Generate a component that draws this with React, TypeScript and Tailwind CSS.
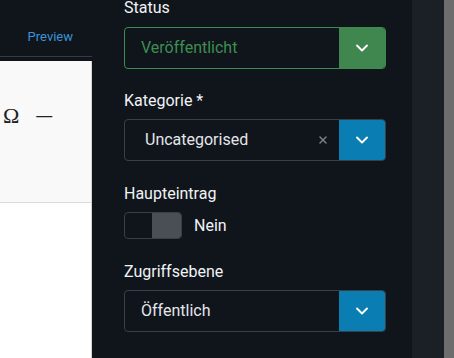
import { ChevronDown, X } from "lucide-react";

// ==================== 下拉选择 ====================

type SelectProps = {
  value: string;
  tone: "green" | "blue";
  clearable?: boolean;
};

const Select = ({ value, tone, clearable }: SelectProps) => {
  const green = tone === "green";
  const textClass = green
    ? "pl-4 text-[#3d8f50]"
    : clearable
      ? "pl-5 text-[#e4e6ea]"
      : "pl-4 text-[#e4e6ea]";

  return (
    <div
      className={`flex h-[42px] w-[262px] overflow-hidden rounded-[4px] border ${
        green ? "border-[#3d8b4f]" : "border-[#3a3f47]"
      }`}
    >
      <div className="flex flex-1 items-center">
        <span className={`text-[16px] ${textClass}`}>{value}</span>
        {clearable && (
          <X className="ml-auto mr-[10px] h-[12px] w-[12px] text-[#7b7f86]" strokeWidth={3} />
        )}
      </div>
      <div
        className={`flex w-[46px] items-center justify-center ${
          green ? "bg-[#3f864f]" : "bg-[#0a7db3]"
        }`}
      >
        <ChevronDown className="h-[20px] w-[20px] text-white" strokeWidth={2.25} />
      </div>
    </div>
  );
};

const Label = ({ children }: { children: React.ReactNode }) => (
  <p className="text-[16px] leading-[20px] text-[#f1f3f5]">{children}</p>
);

export default function App() {
  return (
    <div
      className="flex h-[358px] w-[454px] overflow-hidden bg-[#10151c]"
      style={{ fontFamily: "Roboto, 'Liberation Sans', sans-serif" }}
    >
      {/* 左侧编辑器 */}
      <div className="flex w-[92px] flex-col">
        <div className="flex h-[56px] items-end justify-end pr-[19px] pb-[10px]">
          <span className="text-[13px] text-[#3b93d6]">Preview</span>
        </div>
        <div className="h-px bg-[#343942]" />
        <div className="mt-[4px] flex flex-1 flex-col border-r border-[#d4d4d4] bg-white">
          <div className="flex h-[142px] items-start gap-[17px] border-b border-[#dadada] bg-[#f9f9f9] pl-[3px] pt-[44px]">
            <span
              className="text-[22px] leading-[22px] text-[#222]"
              style={{ fontFamily: "'Liberation Serif', serif" }}
            >
              Ω
            </span>
            <span
              className="text-[16px] leading-[22px] text-[#222]"
              style={{ fontFamily: "'Liberation Sans', sans-serif" }}
            >
              —
            </span>
          </div>
          <div className="flex-1" />
        </div>
      </div>

      {/* 右侧设置面板 */}
      <div className="flex w-[320px] flex-col pl-[32px]">
        <div className="-mt-[2px]">
          <Label>Status</Label>
        </div>
        <div className="mt-[9px]">
          <Select value="Veröffentlicht" tone="green" />
        </div>

        <div className="mt-[22px]">
          <Label>Kategorie *</Label>
        </div>
        <div className="mt-[8px]">
          <Select value="Uncategorised" tone="blue" clearable />
        </div>

        <div className="mt-[23px]">
          <Label>Haupteintrag</Label>
        </div>
        <div className="mt-[8px] flex items-center gap-[12px]">
          <div className="flex h-[27px] w-[58px] overflow-hidden rounded-[4px] border border-[#3a3f47]">
            <div className="flex-1" />
            <div className="w-[29px] bg-[#4a4e55]" />
          </div>
          <span className="text-[16px] text-[#f1f3f5]">Nein</span>
        </div>

        <div className="mt-[23px]">
          <Label>Zugriffsebene</Label>
        </div>
        <div className="mt-[8px]">
          <Select value="Öffentlich" tone="blue" />
        </div>

        <div className="mt-[24px]">
          <Label>Schlagwörter</Label>
        </div>
      </div>

      <div className="w-[32px] bg-[#1b1f26]" />
      <div className="w-[10px] bg-[#6d6d6d]" />
    </div>
  );
}
